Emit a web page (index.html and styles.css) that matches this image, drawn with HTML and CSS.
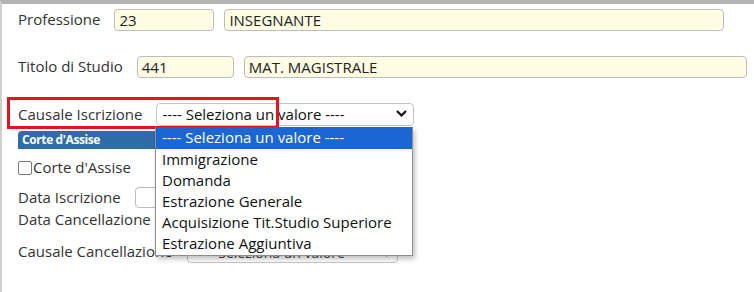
FILE: index.html
```html
<!DOCTYPE html>
<html lang="it">
<head>
  <meta charset="UTF-8" />
  <title>Anagrafica</title>
  <link rel="stylesheet" href="styles.css">
</head>
<body>
  <div class="page">
    <div class="row row-prof">
      <label>Professione</label>
      <input class="fld code" value="23" style="width:100px">
      <input class="fld" value="INSEGNANTE" style="width:500px">
    </div>

    <div class="row row-titolo">
      <label>Titolo di Studio</label>
      <input class="fld code" value="441" style="width:97px">
      <input class="fld" value="MAT. MAGISTRALE" style="width:503px">
    </div>

    <div class="row row-causale">
      <label>Causale Iscrizione</label>
      <div class="select open">
        <span>---- Seleziona un valore ----</span>
        <svg class="chev" width="11" height="7" viewBox="0 0 11 7"><path d="M1 1 L5.5 5.5 L10 1" fill="none" stroke="#111" stroke-width="2.2"/></svg>
      </div>
    </div>

    <div class="section-head">Corte d'Assise</div>

    <div class="row row-check">
      <span class="check"></span>
      <label>Corte d'Assise</label>
    </div>

    <div class="row row-data">
      <label>Data Iscrizione</label>
      <input class="fld plain" style="width:120px">
    </div>

    <div class="row row-data2">
      <label>Data Cancellazione</label>
      <input class="fld plain" style="width:120px">
    </div>

    <div class="row row-canc">
      <label>Causale Cancellazione</label>
      <div class="select small">
        <span>---- Seleziona un valore ----</span>
        <span class="tri">&#9662;</span>
      </div>
    </div>

    <!-- evidenziazione -->
    <div class="highlight"></div>

    <!-- lista aperta della select -->
    <ul class="dropdown">
      <li class="sel">---- Seleziona un valore ----</li>
      <li>Immigrazione</li>
      <li>Domanda</li>
      <li>Estrazione Generale</li>
      <li>Acquisizione Tit.Studio Superiore</li>
      <li>Estrazione Aggiuntiva</li>
    </ul>
  </div>
</body>
</html>
```

FILE: styles.css
```css
body {
  margin: 0;
  font-family: "Open Sans", sans-serif;
  font-size: 15px;
  color: #333;
  background: #fff;
}

.page {
  position: relative;
  width: 752px;
  height: 288px;
  border-top: 4px solid #b3b3b3;
  border-left: 2px solid #cfcfcf;
  padding-left: 16px;
  overflow: hidden;
}

.row {
  display: flex;
  align-items: center;
  height: 22px;
}

.row label {
  margin-right: 14px;
  padding-bottom: 2px;
  white-space: nowrap;
}

.row-prof { margin-top: 5px; }
.row-titolo { margin-top: 25px; }
.row-causale { margin-top: 25px; height: 23px; }
.row-check { margin-top: 9px; height: 20px; }
.row-data { margin-top: 9px; height: 21px; }
.row-data2 { margin-top: 1px; height: 21px; }
.row-canc { margin-top: 11px; }

.fld {
  box-sizing: border-box;
  height: 22px;
  margin-right: 10px;
  padding: 0 4px 1px;
  border: 1px solid #bdbdbd;
  border-radius: 4px;
  background: #fffde3;
  font-family: inherit;
  font-size: 15px;
  color: #222;
}

.fld.plain {
  height: 21px;
  background: #fff;
}

.select {
  box-sizing: border-box;
  display: flex;
  align-items: center;
  justify-content: space-between;
  width: 258px;
  height: 23px;
  padding: 0 6px 2px 5px;
  border: 1px solid #c4c4c4;
  border-radius: 4px;
  background: #fff;
  color: #111;
}

.select.small {
  width: 211px;
  height: 22px;
  padding: 1px 8px 0 9px;
  font-size: 14px;
  color: #444;
}

.tri {
  font-size: 10px;
  color: #333;
}

.section-head {
  margin-top: 5px;
  height: 18px;
  width: 139px;
  padding-left: 4px;
  line-height: 18px;
  background: #2f6da6;
  border-radius: 4px 4px 0 0;
  color: #fff;
  font-size: 12px;
  font-weight: bold;
  letter-spacing: -0.4px;
}

.check {
  box-sizing: border-box;
  width: 14px;
  height: 14px;
  border: 1px solid #767676;
  border-radius: 2px;
  margin-right: 1px;
}

.highlight {
  position: absolute;
  left: 5px;
  top: 93px;
  width: 266px;
  height: 26px;
  border: 3px solid #e3151f;
}

.dropdown {
  position: absolute;
  left: 153px;
  top: 123px;
  width: 256px;
  margin: 0;
  padding: 0 0 1px;
  list-style: none;
  background: #fff;
  border: 1px solid #8d8d8d;
  border-top: none;
  box-shadow: 2px 3px 5px rgba(0, 0, 0, 0.25);
  font-size: 15px;
  color: #111;
}

.dropdown li {
  height: 21px;
  line-height: 20px;
  padding-left: 6px;
  white-space: nowrap;
}

.dropdown li.sel {
  height: 22px;
  line-height: 21px;
  background: #1a66d2;
  color: #fff;
}
```
